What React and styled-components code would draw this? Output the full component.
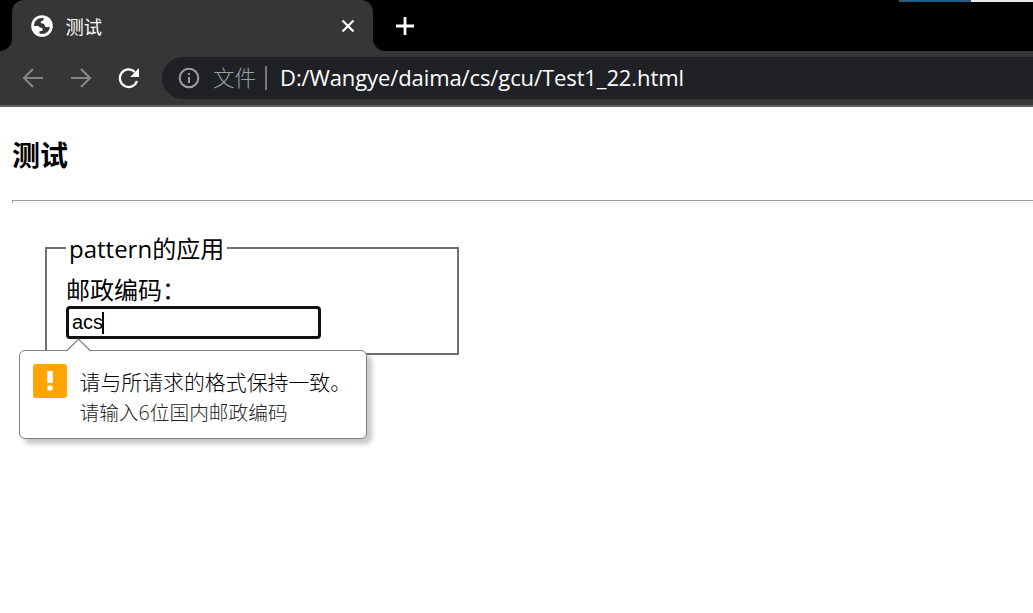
import React from "react";
import styled, { createGlobalStyle } from "styled-components";

const GlobalStyle = createGlobalStyle`
  * { box-sizing: border-box; }
  html, body { margin: 0; padding: 0; background: #fff; overflow: hidden; }
  body { font-family: "Open Sans", "Noto Sans CJK SC", sans-serif; color: #000; }
`;

const Window = styled.div`
  width: 1033px;
  height: 613px;
  overflow: hidden;
  display: flex;
  flex-direction: column;
`;

const TabStrip = styled.div`
  position: relative;
  height: 51px;
  flex: none;
  background: #000;
  display: flex;
  align-items: stretch;
`;

const Corner = styled.span`
  width: 12px;
  height: 12px;
  align-self: flex-end;
  background: ${(p) =>
    `radial-gradient(circle at ${p.$side === "left" ? "0" : "100%"} 0, #000 11.5px, #363636 12.2px)`};
`;

const Tab = styled.div`
  width: 361px;
  background: #363636;
  border-radius: 12px 12px 0 0;
  display: flex;
  align-items: center;
  padding: 0 18px 0 19px;
`;

const TabTitle = styled.span`
  flex: 1;
  margin-left: 12.5px;
  font-size: 18.3px;
  line-height: 24px;
  color: #fff;
  padding-top: 2px;
`;

const NewTab = styled.div`
  width: 20px;
  margin-left: 10px;
  display: flex;
  align-items: center;
`;

const Backdrop = styled.div`
  position: absolute;
  top: 0;
  right: 0;
  width: 134px;
  height: 2px;
  background: linear-gradient(90deg, #285c86 72px, #e8e8e8 72px);
`;

const Toolbar = styled.div`
  height: 56px;
  flex: none;
  background: #363636;
  border-bottom: 2px solid #5f5f5f;
  display: flex;
  align-items: center;
  padding-left: 21px;
`;

const NavButton = styled.span`
  width: 24px;
  height: 24px;
  margin-right: ${(p) => p.$gap || 24}px;
  svg { display: block; }
`;

const AddressBar = styled.div`
  flex: 1;
  height: 42px;
  background: #202124;
  border-radius: 21px 0 0 21px;
  display: flex;
  align-items: center;
  padding-left: 16px;
  svg { flex: none; }
`;

const Scheme = styled.span`
  margin-left: 13px;
  font-size: 21.5px;
  line-height: 30px;
  font-weight: 300;
  color: #9aa0a6;
`;

const Separator = styled.span`
  width: 2px;
  height: 24px;
  margin: 0 13px 0 9px;
  background: #74777b;
`;

const Address = styled.span`
  font-size: 22px;
  line-height: 30px;
  padding-bottom: 2px;
  white-space: nowrap;
  color: #fff;
  letter-spacing: ${(p) => p.$spacing}px;
`;

const Page = styled.main`
  flex: 1;
  padding: 28px 0 0 12px;
`;

const Heading = styled.h3`
  margin: 0;
  font-size: 28px;
  line-height: 40px;
  font-weight: 700;
`;

const Rule = styled.hr`
  margin: 25px 0 0;
  height: 3px;
  border: solid #999;
  border-width: 1px 0 1px 1px;
  border-bottom-color: #eee;
`;

const Fieldset = styled.fieldset`
  position: relative;
  margin: 28px 0 0 33px;
  padding: 5px 0 0 19px;
  width: 413.5px;
  height: 124px;
  border: 2px solid #707070;
`;

const Legend = styled.legend`
  padding: 2px 3px 0;
  font-size: 24px;
  line-height: 32px;
  white-space: nowrap;
  letter-spacing: ${(p) => p.$spacing}px;
`;

const Label = styled.label`
  display: block;
  padding-top: 4px;
  font-size: 24px;
  line-height: 32px;
`;

const Field = styled.div`
  width: 255px;
  height: 33px;
  border: 3px solid #101010;
  border-radius: 4px;
  background: #fff;
  display: flex;
  align-items: center;
  padding-left: 3px;
  font: 20px/27px "Liberation Sans", Arial, sans-serif;
`;

const Caret = styled.i`
  width: 2px;
  height: 22px;
  margin-left: -1px;
  background: #000;
`;

const Bubble = styled.div`
  position: absolute;
  left: -28px;
  top: 85px;
  width: 348px;
  height: 89px;
  padding: 13px 0 0 13px;
  display: flex;
  background: #fff;
  border: 1px solid #808080;
  border-radius: 6px;
  box-shadow: 5px 5px 5px rgba(0, 0, 0, 0.22);
`;

const Pointer = styled.svg`
  position: absolute;
  left: 46px;
  top: -13px;
`;

const Alert = styled.span`
  width: 34px;
  height: 34px;
  border-radius: 3px;
  background: #ffa400;
  svg { display: block; }
`;

const Messages = styled.div`
  margin-left: 12.5px;
  padding-top: 1px;
  white-space: nowrap;
  font-weight: 300;
`;

const Message = styled.div`
  font-size: 20.9px;
  line-height: 34px;
  color: #000;
`;

const Hint = styled.div`
  font-size: 19.7px;
  line-height: 28px;
  color: #222;
`;

const GlobeIcon = () => (
  <svg width="22" height="22" viewBox="0 0 22 22">
    <circle cx="11" cy="11" r="10.8" fill="#fff" />
    <path d="M3 11C3 6.2 6.6 3 11 3L13 3.3C12.6 5.2 11.7 6 10.3 6.2C9.3 6.5 9.5 8 10.6 8.3C13.2 8.8 14.2 10 14.3 12H18.9C18.5 15.9 15.2 19 11 19L8.4 18.6V16.2C10.4 16.4 12 15.6 11.7 14C11.4 12.7 10 12.9 9.2 12.5C7.9 12 8 11 6.8 11Z" fill="#363636" />
  </svg>
);

const ArrowIcon = ({ forward }) => (
  <svg width="24" height="24" viewBox="0 0 24 24" fill="none" stroke="#858585" strokeWidth="2.2">
    <path d={forward ? "M2 12H21M12 3L21 12L12 21" : "M22 12H3M12 3L3 12L12 21"} />
  </svg>
);

export default function App() {
  return (
    <>
      <GlobalStyle />
      <Window>
        <TabStrip>
          <Corner $side="left" />
          <Tab>
            <GlobeIcon />
            <TabTitle>测试</TabTitle>
            <svg width="14" height="14" viewBox="0 0 14 14" stroke="#fff" strokeWidth="2.2">
              <path d="M1.5 1.5L12.5 12.5M12.5 1.5L1.5 12.5" />
            </svg>
          </Tab>
          <Corner $side="right" />
          <NewTab>
            <svg width="20" height="20" viewBox="0 0 20 20" stroke="#fff" strokeWidth="2.8">
              <path d="M1 10H19M10 1V19" />
            </svg>
          </NewTab>
          <Backdrop />
        </TabStrip>
        <Toolbar>
          <NavButton><ArrowIcon /></NavButton>
          <NavButton><ArrowIcon forward /></NavButton>
          <NavButton $gap={21}>
            <svg width="24" height="24" viewBox="0 0 24 24">
              <path d="M20 15A8.8 8.8 0 1 1 17.7 5.8" fill="none" stroke="#fff" strokeWidth="2.3" />
              <path d="M22 2V11H13.2Z" fill="#fff" />
            </svg>
          </NavButton>
          <AddressBar>
            <svg width="22" height="22" viewBox="0 0 22 22" fill="none" stroke="#9aa0a6" strokeWidth="2">
              <circle cx="11" cy="11" r="9.3" />
              <path d="M11 10V16M11 6V8" />
            </svg>
            <Scheme>文件</Scheme>
            <Separator />
            <Address $spacing={-0.1}>D:/Wangye/daima/cs/gcu/Test1_22.html</Address>
          </AddressBar>
        </Toolbar>
        <Page>
          <Heading>测试</Heading>
          <Rule />
          <Fieldset>
            <Legend $spacing={0}>pattern的应用</Legend>
            <Label>邮政编码：</Label>
            <Field>acs<Caret /></Field>
            <Bubble role="alert">
              <Pointer width="26" height="14" viewBox="0 0 26 14">
                <path d="M0.5 13L12.5 1L24.5 13V14H0.5Z" fill="#fff" />
                <path d="M0.5 13L12.5 1L24.5 13" fill="none" stroke="#808080" strokeWidth="1.2" />
              </Pointer>
              <Alert>
                <svg width="34" height="34" viewBox="0 0 34 34" fill="#fff">
                  <path d="M14.2 7H19.8V19H14.2Z" />
                  <circle cx="17" cy="24" r="2.8" />
                </svg>
              </Alert>
              <Messages>
                <Message>请与所请求的格式保持一致。</Message>
                <Hint>请输入6位国内邮政编码</Hint>
              </Messages>
            </Bubble>
          </Fieldset>
        </Page>
      </Window>
    </>
  );
}
